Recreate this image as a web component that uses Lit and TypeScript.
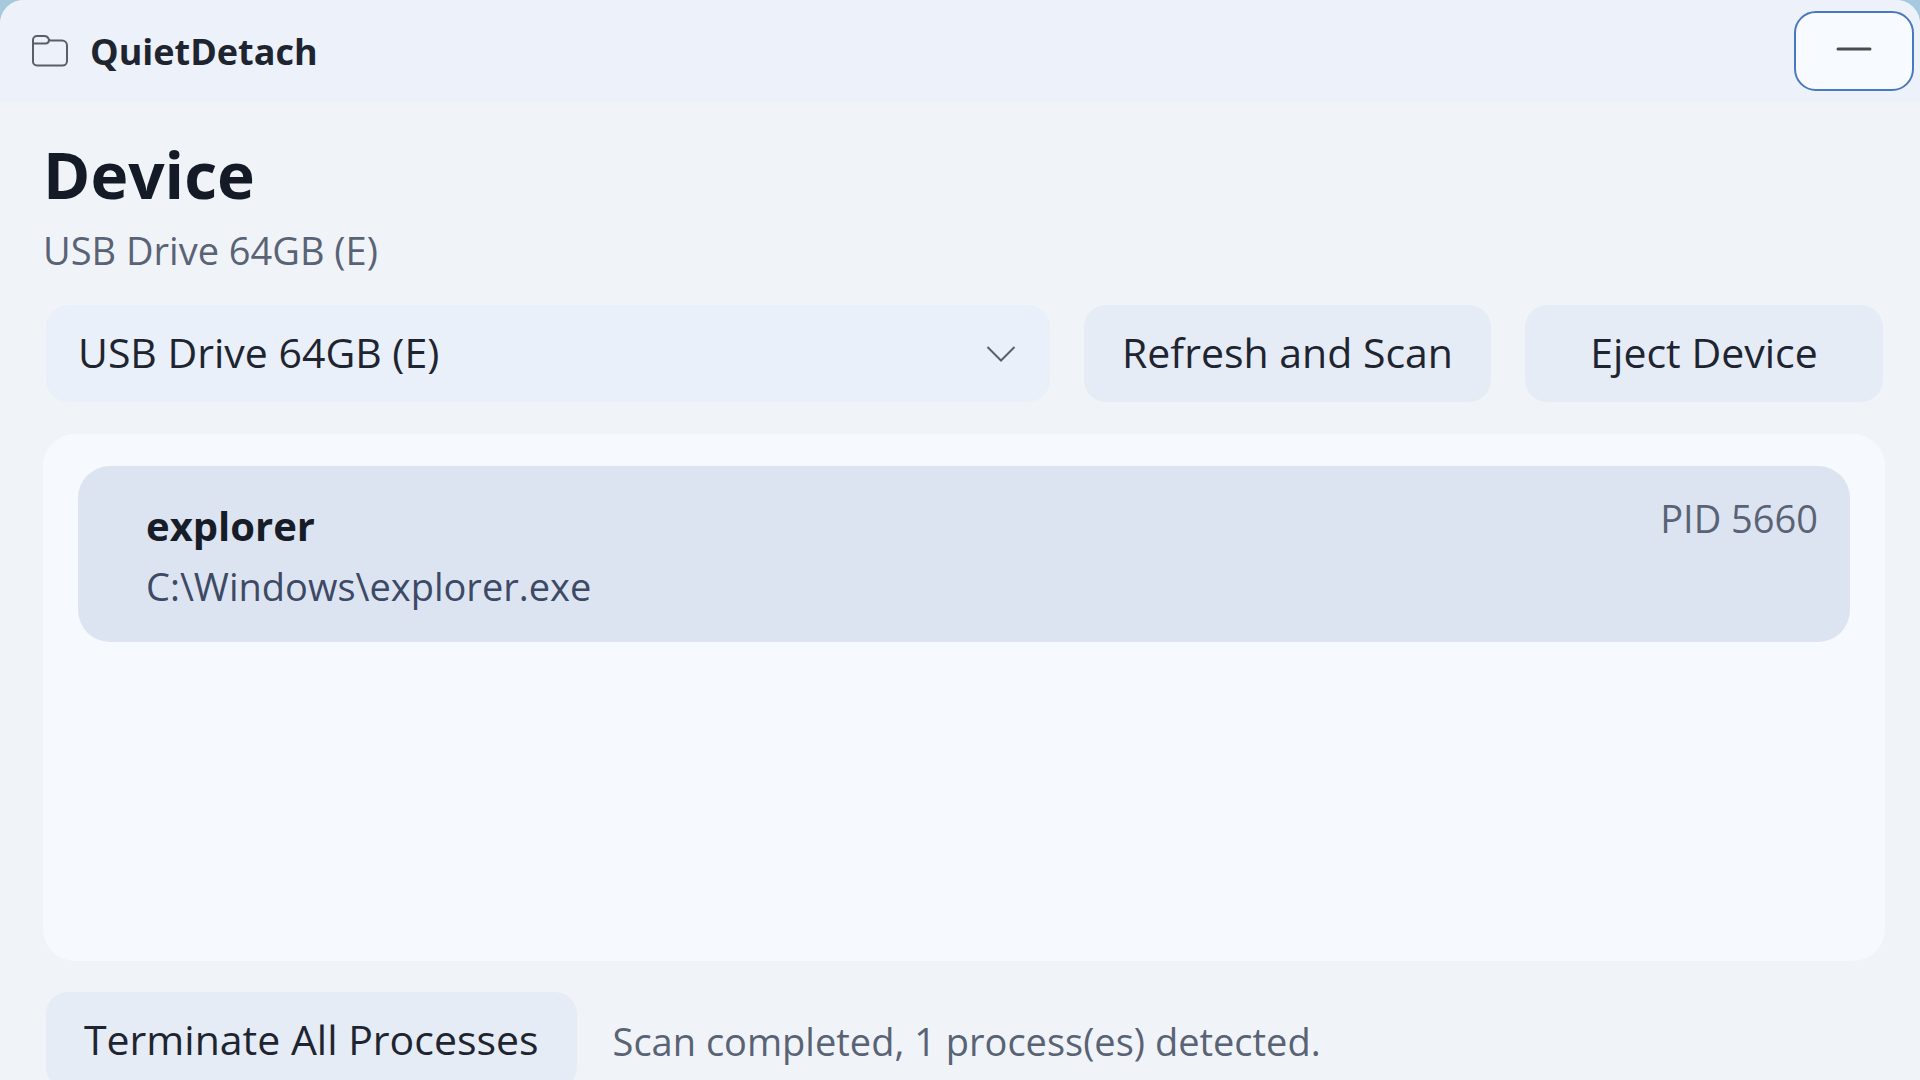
import { LitElement, html, css } from "lit";
import { customElement, state } from "lit/decorators.js";

interface ProcessInfo {
  name: string;
  path: string;
  pid: number;
}

@customElement("app-root")
export class AppRoot extends LitElement {
  @state() private devices: string[] = ["USB Drive 64GB (E)"];
  @state() private device = "USB Drive 64GB (E)";
  @state() private processes: ProcessInfo[] = [
    { name: "explorer", path: "C:\\Windows\\explorer.exe", pid: 5660 },
  ];

  static styles = css`
    :host {
      display: block;
      height: 100vh;
      overflow: hidden;
      background: #a6c9de;
      color: #1f2530;
      font-family: "Open Sans", "Noto Sans", sans-serif;
    }
    * {
      box-sizing: border-box;
    }
    .window {
      display: flex;
      flex-direction: column;
      min-height: calc(100vh + 35px);
      border-radius: 24px;
      overflow: hidden;
      background: #f0f4f9;
    }
    .titlebar {
      display: flex;
      align-items: center;
      height: 102px;
      padding: 0 6px 0 32px;
      background: #ecf1fa;
    }
    .folder {
      width: 36px;
      height: 32px;
      margin-right: 22px;
    }
    .app-name {
      flex: 1;
      padding-top: 2px;
      font-size: 36px;
      line-height: 48px;
      font-weight: 700;
    }
    .minimize {
      display: grid;
      place-items: center;
      width: 120px;
      height: 80px;
      padding: 0 0 4px;
      border: 2px solid #4a78c0;
      border-radius: 22px;
      background: #f7faff;
    }
    .minimize svg {
      width: 36px;
      height: 4px;
    }
    main {
      flex: 1;
      display: flex;
      flex-direction: column;
      padding: 29px 35px 26px 43px;
    }
    h1 {
      margin: 0 0 3px;
      font-size: 64px;
      line-height: 88px;
      font-weight: 700;
      color: #141a26;
    }
    .subtitle {
      margin: 0;
      font-size: 38px;
      line-height: 56px;
      color: #5a6375;
    }
    .toolbar,
    .footer {
      padding: 0 2px 0 3px;
    }
    .toolbar {
      display: flex;
      gap: 34px;
      margin: 27px 0 32px;
    }
    .picker {
      flex: 1;
      display: grid;
      align-items: center;
    }
    .picker select,
    .picker svg {
      grid-area: 1 / 1;
    }
    .picker svg {
      justify-self: end;
      width: 30px;
      height: 18px;
      margin-right: 34px;
      pointer-events: none;
    }
    select,
    .action {
      height: 97px;
      border: 0;
      border-radius: 22px;
      font: inherit;
      font-size: 41px;
      line-height: 56px;
      color: inherit;
    }
    select {
      appearance: none;
      width: 100%;
      padding: 0 80px 4px 32px;
      background: #e9f0f9;
    }
    .action {
      min-width: 358px;
      padding: 0 38px 4px;
      background: #e5ecf6;
      white-space: nowrap;
    }
    .card {
      flex: 1;
      margin: 0;
      padding: 32px 35px;
      border-radius: 32px;
      background: #f6f9fe;
      list-style: none;
    }
    .process {
      display: flex;
      justify-content: space-between;
      min-height: 176px;
      padding: 32px 32px 26px 68px;
      border-radius: 32px;
      background: #dde4f1;
    }
    .name {
      margin: 0 0 4px;
      font-size: 40px;
      line-height: 56px;
      font-weight: 700;
      color: #171d28;
    }
    .path,
    .pid,
    .status {
      margin: 0;
      font-size: 38px;
      line-height: 56px;
    }
    .path {
      color: #3d4a66;
    }
    .pid {
      line-height: 40px;
      color: #5a6375;
    }
    .footer {
      display: flex;
      align-items: center;
      gap: 36px;
      margin-top: 31px;
    }
    .status {
      color: #5a6375;
    }
  `;

  private onSelect(e: Event) {
    this.device = (e.target as HTMLSelectElement).value;
  }

  private terminateAll() {
    this.processes = [];
  }

  render() {
    return html`
      <div class="window">
        <header class="titlebar">
          <svg class="folder" viewBox="0 0 36 32" fill="none" stroke="#5a5e68" stroke-width="2" aria-hidden="true">
            <path d="M1 5a4 4 0 0 1 4-4h7.500c2 0 3.200 1 4 2.600.5 1.200 1.300 1.900 2.500 1.900H30a5 5 0 0 1 5 5V26a4.500 4.500 0 0 1-4.500 4.500H5a4 4 0 0 1-4-4z" />
            <path d="M1 8.500h12.500c2.400 0 3.500-1.200 3.500-4" />
          </svg>
          <span class="app-name">QuietDetach</span>
          <button class="minimize" aria-label="Minimize">
            <svg viewBox="0 0 36 4" aria-hidden="true">
              <path d="M2 2h32" stroke="#4a4c50" stroke-width="3" stroke-linecap="round" />
            </svg>
          </button>
        </header>
        <main>
          <h1>Device</h1>
          <p class="subtitle">${this.device}</p>
          <div class="toolbar">
            <div class="picker">
              <select aria-label="Device" .value=${this.device} @change=${this.onSelect}>
                ${this.devices.map((d) => html`<option value=${d}>${d}</option>`)}
              </select>
              <svg viewBox="0 0 30 18" fill="none" stroke="#5a5f68" stroke-width="2" aria-hidden="true">
                <path d="M1.500 2 15 15.500 28.500 2" />
              </svg>
            </div>
            <button class="action">Refresh and Scan</button>
            <button class="action">Eject Device</button>
          </div>
          <ul class="card">
            ${this.processes.map(
              (p) => html`
                <li class="process">
                  <div>
                    <p class="name">${p.name}</p>
                    <p class="path">${p.path}</p>
                  </div>
                  <p class="pid">PID ${p.pid}</p>
                </li>
              `
            )}
          </ul>
          <div class="footer">
            <button class="action" @click=${this.terminateAll}>Terminate All Processes</button>
            <p class="status" role="status">Scan completed, ${this.processes.length} process(es) detected.</p>
          </div>
        </main>
      </div>
    `;
  }
}
